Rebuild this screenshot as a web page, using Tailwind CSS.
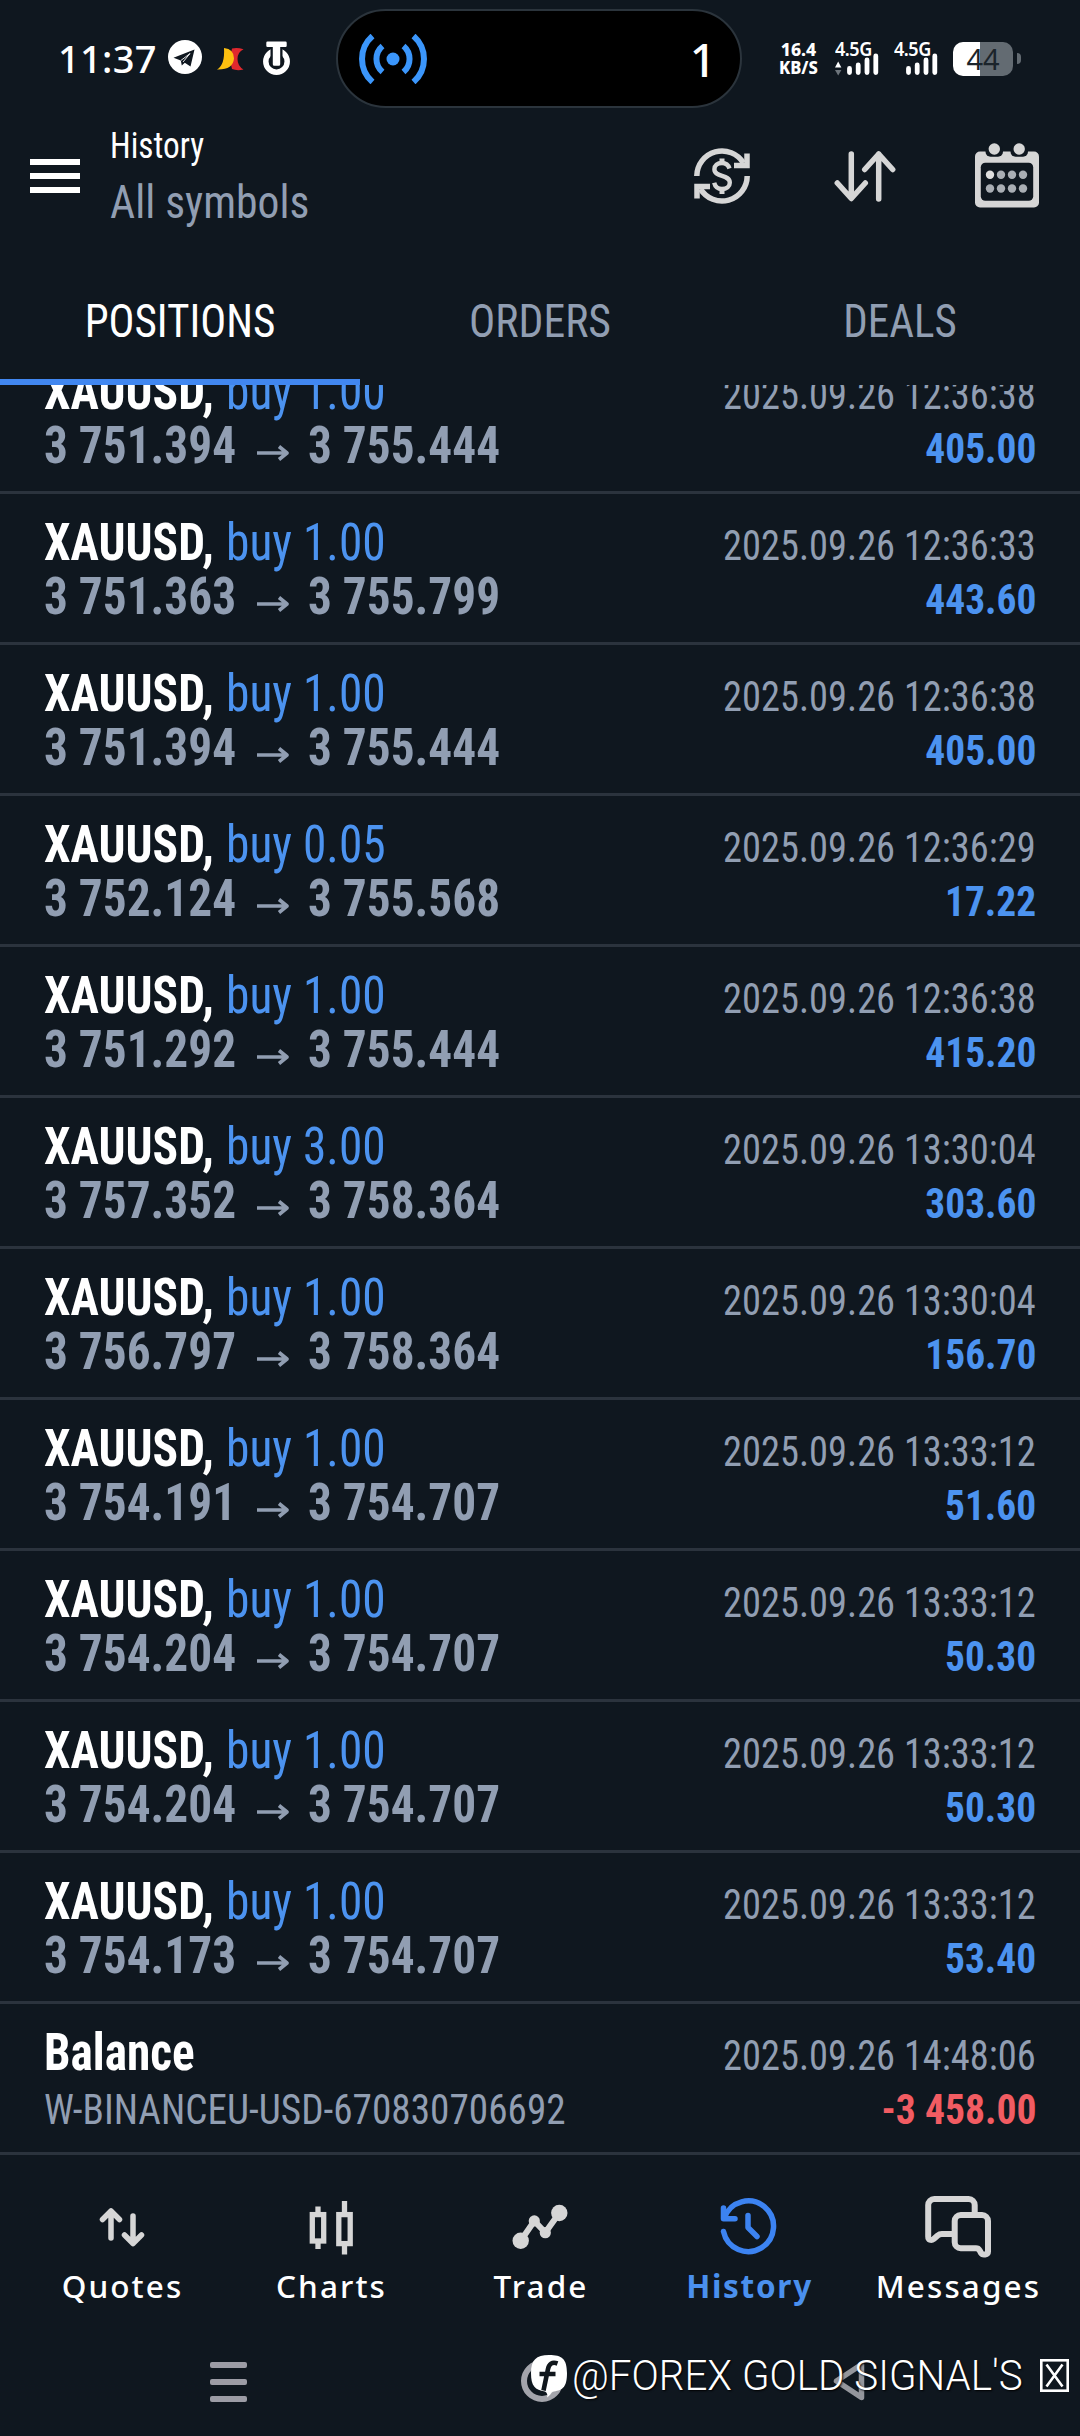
<!DOCTYPE html>
<html lang="en">
<head>
  <meta charset="UTF-8" />
  <meta name="viewport" content="width=device-width, initial-scale=1.0" />
  <title>History</title>
  <script src="https://cdn.jsdelivr.net/npm/@tailwindcss/browser@4"></script>
</head>
<body class="bg-[#0f171f] w-[1080px] h-[2436px] overflow-hidden font-['Roboto',sans-serif] font-stretch-75% text-white whitespace-nowrap">

<!-- Status bar -->
<div class="h-[117px] flex items-center font-['Noto_Sans',sans-serif]">
  <div class="w-[336px] pl-[58px] flex items-center">
    <span class="w-[110px] text-[38px] leading-[40px] font-medium tracking-[0.3px] -mt-[2px]">11:37</span>
    <svg class="w-[34px] h-[34px] -mt-[3px]" viewBox="0 0 34 34">
      <circle cx="17" cy="17" r="17" fill="#fff"/>
      <path d="M5.5 17.8 26.5 9.5 22.5 26.5 16.8 22.8 13.8 25.6 12.8 20.6Z" fill="#0f171f"/>
      <path d="M13 20.4 22 13.5 15 22" fill="none" stroke="#fff" stroke-width="0.9"/>
    </svg>
    <svg class="ml-[15px] w-[27px] h-[24px] mt-[1px]" viewBox="0 0 27 24">
      <path d="M15 1.5Q20 0 26.5 2.2 20.5 5 20.5 12T26.5 22.500Q20 24 15 22Q12 12 15 1.500Z" fill="#e0282e"/>
      <path d="M7 1Q17 2 17 11.500 16 23 0 22.500 8 18 7 1Z" fill="#fdc010"/>
    </svg>
    <svg class="ml-[19px] w-[27px] h-[35px] -mt-[2px]" viewBox="0 0 27 35">
      <circle cx="13.500" cy="21.500" r="10.700" fill="none" stroke="#fff" stroke-width="5.500"/>
      <path d="M7.500 6h12v18a5 5 0 0 1-5 4h-2a5 5 0 0 1-5-4Z" fill="#0f171f"/>
      <path d="M4.500 1.500h18a1.200 1.200 0 0 1 1.200 1.200v3a1.200 1.200 0 0 1-1.200 1.200H17.200v17.300a1.500 1.500 0 0 1-1.500 1.500h-4.400a1.500 1.500 0 0 1-1.500-1.500V6.900H4.500a1.200 1.200 0 0 1-1.200-1.200v-3a1.200 1.200 0 0 1 1.200-1.200Z" fill="#fff"/>
    </svg>
  </div>
  <div class="w-[406px] h-[99px] rounded-full bg-black border-2 border-[#2b343c] pl-[21px] pr-[24px] flex items-center justify-between">
    <svg class="w-[68px] h-[50px]" viewBox="0 0 68 50" fill="none" stroke="#3b96fb" stroke-width="6">
      <circle cx="34" cy="25" r="6.500" fill="#3b96fb" stroke="none"/>
      <path d="M23.500 12A17 17 0 0 0 23.500 38M44.500 12A17 17 0 0 1 44.500 38"/>
      <path d="M13.500 2A30.500 30.500 0 0 0 13.500 48M54.500 2A30.500 30.500 0 0 1 54.500 48"/>
    </svg>
    <span class="text-[46px] leading-[50px] font-medium">1</span>
  </div>
  <div class="pl-[36px] flex items-center">
    <div class="w-[41px] h-[40px] -mt-[2px] flex flex-col items-center justify-center text-[17.5px] leading-[18px] font-extrabold">
      <span>16.4</span>
      <span class="scale-x-95">KB/S</span>
    </div>
    <div class="ml-[16px] w-[44px] h-[34px] flex flex-col justify-between -mt-[2px]">
      <span class="text-[20px] leading-[15px] font-semibold tracking-[-0.5px] origin-left scale-x-[0.9]">4.5G</span>
      <svg class="w-[44px] h-[22px] -mt-[3px] overflow-visible" viewBox="0 0 44 22">
        <path d="M0 14.500 3.200 8.500 6.400 14.500Z" fill="#fff"/>
        <path d="M0 17 3.200 22.500 6.400 17Z" fill="#6d757c"/>
        <path d="M14.500 15.500V19.500M23.200 12V19.500M32 7V19.500M40.800 3V19.500" stroke="#fff" stroke-width="4.800" stroke-linecap="round"/>
      </svg>
    </div>
    <div class="ml-[15px] w-[44px] h-[34px] flex flex-col justify-between -mt-[2px]">
      <span class="text-[20px] leading-[15px] font-semibold tracking-[-0.5px] origin-left scale-x-[0.9]">4.5G</span>
      <svg class="w-[44px] h-[22px] -mt-[3px] overflow-visible" viewBox="0 0 44 22">
        <path d="M14.500 15.500V19.500M23.200 12V19.500M32 7V19.500M40.800 3V19.500" stroke="#fff" stroke-width="4.800" stroke-linecap="round"/>
      </svg>
    </div>
    <div class="ml-[15px] w-[60px] h-[34px] rounded-[10px] bg-linear-to-r from-white from-45% to-[#636b72] to-45% flex items-center justify-center">
      <span class="text-[29px] leading-[34px] text-[#1b242b]">44</span>
    </div>
    <span class="ml-[4px] w-[4px] h-[11px] rounded-r-[4px] bg-[#636b72]"></span>
  </div>
</div>

<!-- App bar -->
<header class="h-[118px] pl-[30px] flex items-center">
  <div class="w-[50px] flex flex-col gap-[8px]">
    <span class="h-[6px] bg-white"></span>
    <span class="h-[6px] bg-white"></span>
    <span class="h-[6px] bg-white"></span>
  </div>
  <div class="ml-[30px] w-[584px] h-[118px] pt-[8px]">
    <h1 class="text-[36px] leading-[42px] origin-left scale-x-[0.925]">History</h1>
    <p class="mt-[8px] text-[47px] leading-[54px] text-[#919eb2] origin-left scale-x-[0.928]">All symbols</p>
  </div>
  <svg class="w-[56px] h-[56px]" viewBox="0 0 56 56" fill="none" stroke="#d6d6d6" stroke-width="5.500">
    <path d="M2.800 28A25.200 25.200 0 0 1 49.500 15"/>
    <path d="M53 5.500V17.600H40"/>
    <path d="M53.200 28A25.200 25.200 0 0 1 6.500 41"/>
    <path d="M3 50.500V38.400H16"/>
    <path d="M35.500 20.500C34.200 16.500 31.500 15 28 15c-4.600 0-7.600 2.600-7.600 6.200 0 8.600 15.400 4.800 15.400 13.500 0 3.800-3.200 6.300-7.800 6.300-4.200 0-6.800-2-7.800-6.200" stroke-width="4.400"/>
    <path d="M28 10.500V16M28 40v6" stroke-width="5"/>
  </svg>
  <svg class="ml-[84px] w-[62px] h-[52px]" viewBox="0 0 62 52" fill="none" stroke="#d6d6d6" stroke-width="5.500" stroke-linecap="round" stroke-linejoin="round">
    <path d="M17.300 4V48M3.300 33 17.300 48.500 31.300 33"/>
    <path d="M44.700 49V4M30.700 19.500 44.700 4 58.700 19.500"/>
  </svg>
  <svg class="ml-[79px] -mt-[1px] w-[64px] h-[65px]" viewBox="0 0 64 65">
    <rect y="8.500" width="64" height="56" rx="5" fill="#d6d6d6"/>
    <rect x="5.800" y="19.700" width="52.400" height="38" rx="4.500" fill="#0f171f"/>
    <rect x="10.500" y="2" width="17.500" height="11.800" rx="5" fill="#0f171f"/>
    <rect x="35.500" y="2" width="17.500" height="11.800" rx="5" fill="#0f171f"/>
    <circle cx="19.300" cy="6" r="5.700" fill="#d6d6d6"/>
    <circle cx="44.200" cy="6" r="5.700" fill="#d6d6d6"/>
    <circle cx="15" cy="31.800" r="4.200" fill="#dedede"/>
    <g fill="#a9aeb4">
      <circle cx="26" cy="31.800" r="4.200"/><circle cx="37" cy="31.800" r="4.200"/><circle cx="48" cy="31.800" r="4.200"/>
      <circle cx="15" cy="45.500" r="4.200"/><circle cx="26" cy="45.500" r="4.200"/><circle cx="37" cy="45.500" r="4.200"/><circle cx="48" cy="45.500" r="4.200"/>
    </g>
  </svg>
</header>

<!-- Tabs -->
<nav class="h-[150px] grid grid-cols-3 text-center text-[46px] leading-[54px] text-[#919eb2]">
  <div class="pt-[59px] border-b-6 border-[#4187f0] text-white"><p class="scale-x-[0.938]">POSITIONS</p></div>
  <div class="pt-[59px]"><p class="scale-x-[0.95]">ORDERS</p></div>
  <div class="pt-[59px]"><p class="scale-x-[0.935]">DEALS</p></div>
</nav>

<!-- Closed positions -->
<main class="h-[1770px] overflow-hidden">
  <div id="positions" class="-mt-[42px]"></div>
  <div class="h-[151px] border-b-3 border-[#2b333d] pt-[22px] pl-[44px] pr-[44px]">
    <div class="h-[54px] flex justify-between items-baseline leading-[54px]">
      <span class="text-[51px] font-bold origin-left scale-x-[0.927]">Balance</span>
      <span class="text-[42px] text-[#919eb2] origin-right scale-x-[0.915]">2025.09.26 14:48:06</span>
    </div>
    <div class="h-[54px] pt-[3px] flex justify-between items-baseline leading-[54px]">
      <span class="text-[42px] text-[#919eb2] origin-left scale-x-[0.934]">W-BINANCEU-USD-670830706692</span>
      <span class="text-[42px] font-bold text-[#f25c62] origin-right scale-x-[0.942]">-3 458.00</span>
    </div>
  </div>
</main>

<!-- Bottom navigation -->
<nav class="h-[151px] pl-[17px] pt-[40px] grid grid-cols-[repeat(5,209px)] font-['Noto_Sans',sans-serif] text-[31.5px] leading-[40px] font-medium tracking-[2.1px]">
  <div class="flex flex-col items-center">
    <svg class="w-[64px] h-[64px] -ml-[2px]" viewBox="0 0 64 64" fill="none" stroke="#d6d6d6" stroke-width="5.500" stroke-linecap="round" stroke-linejoin="round">
      <path d="M22 43V16M13.500 24.500 22 16 30.500 24.500"/>
      <path d="M44 21V48.500M35.500 40 44 48.500 52.500 40"/>
    </svg>
    <span class="mt-[7px] ml-[2px]">Quotes</span>
  </div>
  <div class="flex flex-col items-center">
    <svg class="w-[64px] h-[64px]" viewBox="0 0 64 64" fill="none" stroke="#d6d6d6" stroke-width="5.300">
      <rect x="13.300" y="19.600" width="11.400" height="26.400"/>
      <path d="M19 11.500V19M19 47V54"/>
      <rect x="39.800" y="19.600" width="11.400" height="29"/>
      <path d="M45.500 6V19M45.500 49V59.500"/>
    </svg>
    <span class="mt-[7px] ml-[2px]">Charts</span>
  </div>
  <div class="flex flex-col items-center">
    <svg class="w-[64px] h-[64px]" viewBox="0 0 64 64" fill="#d6d6d6">
      <path d="M12.700 45.700 26.300 26 37.300 37.500 51.300 18" fill="none" stroke="#d6d6d6" stroke-width="6"/>
      <circle cx="12.700" cy="45.700" r="8.200"/>
      <circle cx="26.300" cy="25.900" r="5.600"/>
      <circle cx="37.300" cy="37.700" r="5.600"/>
      <circle cx="51.300" cy="18" r="8.200"/>
    </svg>
    <span class="mt-[7px] ml-[3px]">Trade</span>
  </div>
  <div class="flex flex-col items-center">
    <svg class="w-[64px] h-[64px] -ml-[1px]" viewBox="0 0 64 64" fill="none" stroke="#3c83f1" stroke-width="5.500" stroke-linecap="round" stroke-linejoin="round">
      <path d="M7.500 36.500A25.300 25.300 0 1 0 8.500 22.500"/>
      <path d="M7.500 13V23.800H19"/>
      <path d="M32 20.500V32.500L41 41.500"/>
    </svg>
    <span class="mt-[7px] ml-[2px] font-bold tracking-[1.7px] text-[#4a90ee]">History</span>
  </div>
  <div class="flex flex-col items-center">
    <svg class="w-[64px] h-[64px] overflow-visible" viewBox="0 0 64 64" fill="none" stroke="#d6d6d6" stroke-width="6" stroke-linejoin="round">
      <path d="M48.700 18V10a6 6 0 0 0-6-6H8.200a6 6 0 0 0-6 6V41.500c0 3.500 3 4.500 5.500 2.500l4-3.500c1.200-1 2.600-1.500 4-1.500H27"/>
      <path d="M34.700 20H56a6 6 0 0 1 6 6V56.500c0 3.500-5.500 4-7 1.500l-1.500-2.800c-.7-1.200-1.800-2-3.500-2H34.700a6 6 0 0 1-6-6V26a6 6 0 0 1 6-6Z"/>
    </svg>
    <span class="mt-[7px] ml-[2px]">Messages</span>
  </div>
</nav>

<!-- System navigation with the channel tag lying over it -->
<div class="relative h-[130px] pt-[54px] pl-[210px] flex items-start">
  <div class="w-[37px] pt-[2px] flex flex-col gap-[11px]">
    <span class="h-[6px] rounded-[2px] bg-[#9c9ca5]"></span>
    <span class="h-[6px] rounded-[2px] bg-[#9c9ca5]"></span>
    <span class="h-[6px] rounded-[2px] bg-[#9c9ca5]"></span>
  </div>
  <span class="ml-[274px] w-[42px] h-[42px] rounded-full border-[6px] border-[#a3a4ab]"></span>
  <svg class="ml-[270px] w-[32px] h-[42px]" viewBox="0 0 32 42">
    <path d="M28.500 4.500V37.500L3.500 21Z" fill="none" stroke="#94969c" stroke-width="5.500" stroke-linejoin="round"/>
  </svg>
  <div class="absolute left-[530px] top-[43px] flex items-center h-[52px]">
    <svg class="w-[38px] h-[44px] mt-[2px]" viewBox="0 0 38 44">
      <path d="M19 1C32 1 37 5 37 19S33 36 24 37.500C21 38 21 41 17 43.500 18 41 17 38.500 15 37.500 5 36 1 32 1 19S6 1 19 1Z" fill="#fff"/>
      <path d="M27.500 9.500C22 7.500 19 10 18 15L13.500 36.500M9.500 20H25.500" fill="none" stroke="#10161c" stroke-width="4.600"/>
    </svg>
    <span class="ml-[4px] mt-[1px] w-[468px] text-[42px] leading-[52px] font-[350] font-stretch-100% origin-left scale-x-[0.96] [text-shadow:1px_1px_2px_#000]">@FOREX GOLD SIGNAL'S</span>
    <svg class="w-[29px] h-[33px] mt-[1px]" viewBox="0 0 29 33" fill="none" stroke="#fff" stroke-width="2.600">
      <rect x="1.300" y="1.300" width="26.400" height="30.400"/>
      <path d="M6.500 5.500 22.500 27.500M22.500 5.500 6.500 27.500"/>
    </svg>
  </div>
</div>

<script>
  // volume, open price, close price, close time, profit
  const positions = [
    ['1.00', '3 751.394', '3 755.444', '12:36:38', '405.00'],
    ['1.00', '3 751.363', '3 755.799', '12:36:33', '443.60'],
    ['1.00', '3 751.394', '3 755.444', '12:36:38', '405.00'],
    ['0.05', '3 752.124', '3 755.568', '12:36:29', '17.22'],
    ['1.00', '3 751.292', '3 755.444', '12:36:38', '415.20'],
    ['3.00', '3 757.352', '3 758.364', '13:30:04', '303.60'],
    ['1.00', '3 756.797', '3 758.364', '13:30:04', '156.70'],
    ['1.00', '3 754.191', '3 754.707', '13:33:12', '51.60'],
    ['1.00', '3 754.204', '3 754.707', '13:33:12', '50.30'],
    ['1.00', '3 754.204', '3 754.707', '13:33:12', '50.30'],
    ['1.00', '3 754.173', '3 754.707', '13:33:12', '53.40'],
  ];

  document.getElementById('positions').innerHTML = positions.map(([volume, open, close, time, profit]) => `
    <div class="h-[151px] border-b-3 border-[#2b333d] pt-[22px] pl-[44px] pr-[44px]">
      <div class="h-[54px] flex justify-between items-baseline leading-[54px]">
        <div class="flex items-baseline text-[51px]">
          <span class="w-[182px] font-bold origin-left scale-x-[0.93]">XAUUSD,</span>
          <span class="text-[#4c93f0] origin-left scale-x-[0.93]">buy ${volume}</span>
        </div>
        <span class="text-[42px] text-[#919eb2] origin-right scale-x-[0.915]">2025.09.26 ${time}</span>
      </div>
      <div class="h-[54px] flex justify-between items-baseline leading-[54px]">
        <div class="flex items-baseline text-[51px] font-bold text-[#919eb2]">
          <span class="w-[213px] origin-left scale-x-[0.928]">${open}</span>
          <svg class="w-[32px] h-[16px] mr-[19px] translate-y-[-2px]" viewBox="0 0 32 16" fill="none" stroke="#919eb2" stroke-width="3.600">
            <path d="M0 8H30M22 1.500 30 8 22 14.500" stroke-linejoin="round"/>
          </svg>
          <span class="origin-left scale-x-[0.928]">${close}</span>
        </div>
        <span class="text-[42px] font-bold text-[#4c93f0] origin-right scale-x-[0.938]">${profit}</span>
      </div>
    </div>
  `).join('');
</script>
</body>
</html>
